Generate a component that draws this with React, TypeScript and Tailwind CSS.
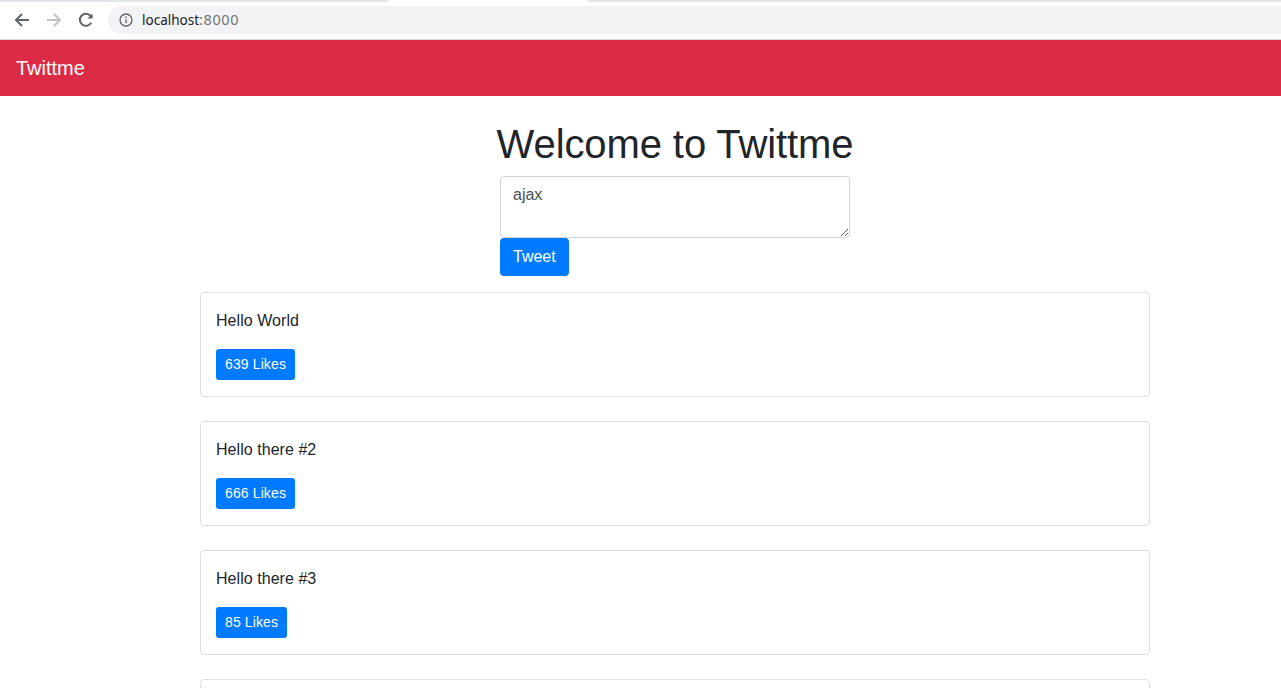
import React from 'react';

const TWEETS = [
  { id: 1, content: 'Hello World', likes: 639 },
  { id: 2, content: 'Hello there #2', likes: 666 },
  { id: 3, content: 'Hello there #3', likes: 85 },
];

function BrowserBar() {
  return (
    <div className="h-[40px] bg-white border-b border-[#dadce0] flex flex-col shrink-0">
      {/* Tab strip edge, the active tab is the white gap */}
      <div className="h-[2px] bg-[#e2e5e9] flex">
        <div className="w-[388px]" />
        <div className="w-[200px] bg-white" />
      </div>
      <div className="flex items-center h-[28px] mt-[4px]">
        <svg width="16" height="16" viewBox="0 0 16 16" className="ml-[14px]" fill="none" stroke="#5f6368" strokeWidth="2">
          <path d="M15 8H2M8 2 2 8l6 6" />
        </svg>
        <svg width="16" height="16" viewBox="0 0 16 16" className="ml-[16px]" fill="none" stroke="#bdc1c6" strokeWidth="2">
          <path d="M1 8h13M8 2l6 6-6 6" />
        </svg>
        <svg width="16" height="16" viewBox="0 0 16 16" className="ml-[16px]" fill="none" stroke="#5f6368" strokeWidth="2">
          <path d="M13.2 10.6A6 6 0 1 1 12.5 4L14 5.6" />
          <path d="M14.5 1.5v5h-5" fill="#5f6368" stroke="none" />
        </svg>
        <div className="ml-[14px] flex-1 h-[28px] bg-[#f1f3f4] rounded-l-[14px] flex items-center pl-[11px] font-['Noto_Sans',sans-serif] text-[13.5px]">
          <svg width="14" height="14" viewBox="0 0 14 14" fill="none" stroke="#5f6368" strokeWidth="1.3">
            <circle cx="7" cy="7" r="6" />
            <path d="M7 6.2v4M7 3.6v1.4" />
          </svg>
          <span className="ml-[9px] text-[#202124]">localhost</span>
          <span className="text-[#70757a] text-[14.5px] tracking-[0.6px]">:8000</span>
        </div>
      </div>
    </div>
  );
}

function TweetCard({ content, likes }: { content: string; likes: number }) {
  return (
    <div className="border border-[#dfdfdf] rounded-[4px] px-[15px] pt-[16px] mb-[24px] h-[105px] bg-white shrink-0">
      <p className="text-[16px] leading-[24px] text-[#212529] mb-[16px] tracking-[0.05px]">{content}</p>
      <button className="bg-[#007bff] text-white text-[14px] leading-[21px] px-[9px] py-[5px] rounded-[3px] tracking-[0.12px]">
        {likes} Likes
      </button>
    </div>
  );
}

export default function App() {
  return (
    <div className="h-[688px] overflow-hidden bg-white font-['Liberation_Sans',sans-serif] flex flex-col">
      <BrowserBar />
      <nav className="h-[56px] bg-[#dc2c45] flex items-center px-[16px] shrink-0">
        <a className="text-[20px] text-white">Twittme</a>
      </nav>
      <div className="w-[950px] ml-[200px] flex flex-col shrink-0">
        <h1 className="text-[40px] leading-[48px] text-[#212529] text-center mt-[24px] mb-[8px] tracking-[-0.1px]">Welcome to Twittme</h1>
        <div className="w-[350px] mx-auto mb-[16px]">
          <textarea
            defaultValue="ajax"
            className="block w-full h-[62px] border border-[#ced4da] rounded-[4px] px-[12px] py-[6px] text-[16px] leading-[24px] text-[#495057] outline-none"
          />
          <button className="block bg-[#007bff] text-white text-[16px] leading-[24px] px-[13px] py-[7px] rounded-[4px]">Tweet</button>
        </div>
        {TWEETS.map((t) => (
          <TweetCard key={t.id} content={t.content} likes={t.likes} />
        ))}
        {/* next card starts just above the fold */}
        <div className="border border-[#dfdfdf] rounded-[4px] h-[105px] shrink-0" />
      </div>
    </div>
  );
}
